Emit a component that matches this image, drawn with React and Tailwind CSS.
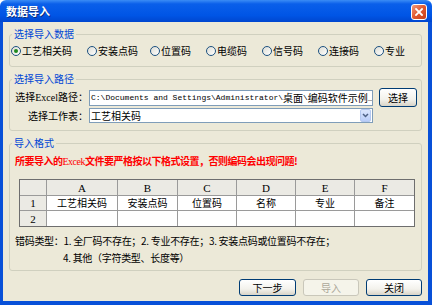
import * as React from 'react';

function Radio({ label, checked, width }) {
  return (
    <div className={`flex items-center gap-[1px] ${width}`}>
      <span className="w-[10px] h-[10px] rounded-full border border-[#1c5180] bg-[linear-gradient(135deg,#dcdcd4,#ffffff)] flex items-center justify-center">
        {checked && <span className="w-[4px] h-[4px] rounded-full bg-[#1f8a1f]" />}
      </span>
      <span className="text-[10px] leading-[12px] text-black">{label}</span>
    </div>
  );
}

function XpButton({ children, disabled, width }) {
  if (disabled) {
    return (
      <div className={`${width} h-[17px] rounded-[3px] border border-[#c9c7ba] bg-[#f5f4ea] flex items-center justify-center text-[10px] leading-[12px] text-[#aca899]`}>
        {children}
      </div>
    );
  }
  return (
    <div className={`${width} h-[17px] rounded-[3px] border border-[#003c74] bg-[linear-gradient(to_bottom,#ffffff,#f3f2ec_60%,#d8d4c8)] flex items-center justify-center text-[10px] leading-[12px] text-black`}>
      {children}
    </div>
  );
}

const cols = ['', 'A', 'B', 'C', 'D', 'E', 'F'];
const row1 = ['1', '工艺相关码', '安装点码', '位置码', '名称', '专业', '备注'];

function cellClass(r, c) {
  const last = c === 6;
  const bottom = r === 2;
  const grey = r === 0 || c === 0;
  if (grey && last) return 'border-b border-[#9a9a9a] bg-[#ebeae4] flex items-center justify-center';
  if (grey && bottom) return 'border-r border-[#9a9a9a] bg-[#ebeae4] flex items-center justify-center';
  if (grey) return 'border-r border-b border-[#9a9a9a] bg-[#ebeae4] flex items-center justify-center';
  if (last && bottom) return 'bg-white flex items-center justify-center';
  if (last) return 'border-b border-[#9a9a9a] bg-white flex items-center justify-center';
  if (bottom) return 'border-r border-[#9a9a9a] bg-white flex items-center justify-center';
  return 'border-r border-b border-[#9a9a9a] bg-white flex items-center justify-center';
}

export default function App() {
  return (
    <div className="w-[432px] h-[305px] flex flex-col font-['Noto_Sans_CJK_SC','Noto_Sans',sans-serif] overflow-hidden">
      {/* title bar */}
      <div className="h-[22px] flex items-center justify-between pl-[6px] pr-[5px] rounded-t-[6px] bg-[linear-gradient(to_bottom,#3b8cf5,#0a5fea_18%,#0055e5_70%,#0046cf)]">
        <span className="text-[11px] leading-[12px] font-bold text-white [text-shadow:1px_1px_0_#0a2d80]">数据导入</span>
        <div className="w-[16px] h-[16px] mt-[2px] rounded-[3px] border border-white bg-[linear-gradient(135deg,#f09a7c,#e2582f_50%,#c4401b)] flex items-center justify-center">
          <svg width="8" height="8" viewBox="0 0 8 8">
            <path d="M1 1 L7 7 M7 1 L1 7" stroke="white" strokeWidth="1.8" strokeLinecap="square" />
          </svg>
        </div>
      </div>

      {/* body */}
      <div className="flex-1 flex flex-col bg-[#ece9d8] border-l-[3px] border-r-[4px] border-b-[4px] border-[#0850d8]">
        <fieldset className="mx-[6px] mt-[6px] px-[1px] pt-[5px] pb-[9px] border border-[#d0d0bf] rounded-[3px]">
          <legend className="ml-[1px] px-[2px] text-[10px] leading-[12px] text-[#0046d5]">选择导入数据</legend>
          <div className="flex items-center h-[12px]">
            <Radio label="工艺相关码" checked width="w-[76px]" />
            <Radio label="安装点码" width="w-[63px]" />
            <Radio label="位置码" width="w-[56px]" />
            <Radio label="电缆码" width="w-[56px]" />
            <Radio label="信号码" width="w-[56px]" />
            <Radio label="连接码" width="w-[56px]" />
            <Radio label="专业" width="w-[40px]" />
          </div>
        </fieldset>

        <fieldset className="mx-[6px] mt-[6px] px-[1px] pt-[3px] pb-[7px] border border-[#d0d0bf] rounded-[3px]">
          <legend className="ml-[1px] px-[2px] text-[10px] leading-[12px] text-[#0046d5]">选择导入路径</legend>
          <div className="flex items-center h-[19px]">
            <div className="w-[77px] text-right text-[10px] leading-[12px] text-black whitespace-nowrap">
              选择<span className="font-['Liberation_Serif',serif]">Excel</span>路径：
            </div>
            <div className="ml-[1px] w-[284px] h-[16px] border border-[#7f9db9] bg-white pl-[1px] flex items-center overflow-hidden whitespace-nowrap">
              <span className="font-['Liberation_Mono',monospace] text-[8px] leading-[12px] text-black">C:\Documents and Settings\Administrator\</span>
              <span className="text-[10px] leading-[12px] text-black">桌面</span>
              <span className="font-['Liberation_Mono',monospace] text-[8px] leading-[12px] text-black">\</span>
              <span className="text-[10px] leading-[12px] text-black">编码软件示例</span>
              <span className="font-['Liberation_Mono',monospace] text-[8px] leading-[12px] text-black">_</span>
            </div>
            <div className="ml-[6px] w-[38px] h-[19px] rounded-[3px] border border-[#003c74] bg-[linear-gradient(to_bottom,#ffffff,#f3f2ec_60%,#d8d4c8)] flex items-center justify-center text-[10px] leading-[12px] text-black">
              选择
            </div>
          </div>
          <div className="flex items-center mt-[1px] h-[15px]">
            <div className="w-[77px] text-right text-[10px] leading-[12px] text-black whitespace-nowrap">选择工作表：</div>
            <div className="ml-[1px] w-[284px] h-[15px] border border-[#7f9db9] bg-white pl-[1px] flex items-center justify-between">
              <span className="text-[10px] leading-[12px] text-black">工艺相关码</span>
              <div className="w-[11px] h-[13px] mr-[1px] rounded-[2px] border border-[#b4c8f0] bg-[linear-gradient(to_bottom,#dbe6fd,#b9cdf9)] flex items-center justify-center">
                <svg width="7" height="5" viewBox="0 0 7 5">
                  <path d="M1 1 L3.5 3.5 L6 1" stroke="#4d6185" strokeWidth="1.5" fill="none" />
                </svg>
              </div>
            </div>
          </div>
        </fieldset>

        <fieldset className="mx-[6px] mt-[6px] px-[1px] pt-[6px] pb-[6px] border border-[#d0d0bf] rounded-[3px]">
          <legend className="ml-[1px] px-[2px] text-[10px] leading-[12px] text-[#0046d5]">导入格式</legend>
          <div className="pl-[4px] text-[10px] leading-[12px] font-bold tracking-[-0.5px] text-[#ff0000] whitespace-nowrap">
            所要导入的<span className="font-['Liberation_Serif',serif] font-normal">Excek</span>文件要严格按以下格式设置，否则编码会出现问题!
          </div>
          <div className="ml-[8px] mt-[11px] w-[396px] border border-[#6e6e6e] grid grid-cols-[27px_71px_60px_59px_59px_59px_59px] grid-rows-[16px_15px_15px]">
            {cols.map((t, c) => (
              <div key={'h' + c} className={cellClass(0, c)}>
                <span className="font-['Liberation_Serif',serif] text-[11px] leading-[12px] text-black">{t}</span>
              </div>
            ))}
            {row1.map((t, c) => (
              <div key={'a' + c} className={cellClass(1, c)}>
                <span className={c === 0 ? "font-['Liberation_Serif',serif] text-[11px] leading-[12px] text-black" : 'text-[10px] leading-[12px] text-black'}>{t}</span>
              </div>
            ))}
            {cols.map((_, c) => (
              <div key={'b' + c} className={cellClass(2, c)}>
                {c === 0 && <span className="font-['Liberation_Serif',serif] text-[11px] leading-[12px] text-black">2</span>}
              </div>
            ))}
          </div>
          <div className="mt-[8px] pl-[4px] h-[12px] text-[10px] leading-[12px] tracking-[-0.3px] text-black whitespace-nowrap">
            错码类型：1. 全厂码不存在；2. 专业不存在；3. 安装点码或位置码不存在；
          </div>
          <div className="mt-[5px] pl-[52px] h-[12px] text-[10px] leading-[12px] tracking-[-0.3px] text-black whitespace-nowrap">
            4. 其他（字符类型、长度等）
          </div>
        </fieldset>

        <div className="mt-[8px] mr-[6px] flex justify-end gap-[7px]">
          <XpButton width="w-[57px]">下一步</XpButton>
          <XpButton width="w-[56px]" disabled>导入</XpButton>
          <XpButton width="w-[56px]">关闭</XpButton>
        </div>
      </div>
    </div>
  );
}
